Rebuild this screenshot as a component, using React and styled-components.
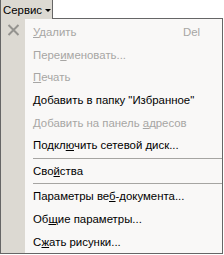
import React from 'react';
import styled, { createGlobalStyle } from 'styled-components';

const GlobalStyle = createGlobalStyle`
  html, body {
    margin: 0;
    padding: 0;
    background: #ffffff;
  }
  body {
    font-family: "Liberation Sans", Arial, sans-serif;
    font-size: 11.4px;
  }
`;

const Wrapper = styled.div`
  width: 223px;
  display: flex;
  flex-direction: column;
  align-items: flex-start;
`;

const MenuTab = styled.div`
  position: relative;
  z-index: 1;
  box-sizing: border-box;
  width: 53px;
  height: 19px;
  margin-bottom: -1px;
  padding-left: 2px;
  display: flex;
  align-items: center;
  gap: 3px;
  background: #dcd9d2;
  border-left: 1px solid #666666;
  border-right: 1px solid #666666;
  color: #000000;
`;

const Arrow = styled.span`
  width: 0;
  height: 0;
  margin-top: 1px;
  border-left: 3px solid transparent;
  border-right: 3px solid transparent;
  border-top: 3px solid #000000;
`;

const Menu = styled.div`
  box-sizing: border-box;
  width: 223px;
  padding-top: 2px;
  border: 1px solid #666666;
  background: linear-gradient(to right, #dcd9d2 24px, #f9f8f7 24px);
  display: flex;
  flex-direction: column;
`;

const Item = styled.div`
  height: 22.6px;
  display: flex;
  align-items: center;
  color: ${(p) => (p.$disabled ? '#a7a6a4' : '#000000')};
  white-space: nowrap;
`;

const IconCell = styled.span`
  width: 24px;
  height: 100%;
  flex: none;
  display: flex;
  justify-content: center;
  align-items: flex-start;
  padding-top: 3px;
  box-sizing: border-box;
`;

const Label = styled.span`
  flex: 1;
  padding-left: 8px;
`;

const Shortcut = styled.span`
  padding-right: 22px;
`;

const Separator = styled.div`
  height: 3px;
  margin-left: 32px;
  display: flex;
  align-items: center;

  &::after {
    content: '';
    flex: 1;
    height: 1px;
    background: #a6a5a2;
  }
`;

const U = styled.u`
  text-decoration-thickness: 1px;
  text-underline-offset: 1px;
`;

const DeleteIcon = () => (
  <svg width="13" height="12" viewBox="0 0 13 12">
    <path d="M1.5 1 L11.5 11 M11.5 1 L1.5 11" stroke="#94938f" strokeWidth="2" fill="none" />
  </svg>
);

const items = [
  { pre: '', key: 'У', post: 'далить', disabled: true, icon: true, shortcut: 'Del' },
  { pre: 'Пере', key: 'и', post: 'меновать...', disabled: true },
  { pre: '', key: 'П', post: 'ечать', disabled: true },
  { pre: '', key: 'Д', post: 'обавить в папку "Избранное"' },
  { pre: 'Добавить на панель ', key: 'а', post: 'дресов', disabled: true },
  { pre: 'Подкл', key: 'ю', post: 'чить сетевой диск...' },
  'sep',
  { pre: 'Сво', key: 'й', post: 'ства' },
  'sep',
  { pre: 'Параметры ве', key: 'б', post: '-документа...' },
  { pre: 'Об', key: 'щ', post: 'ие параметры...' },
  { pre: 'С', key: 'ж', post: 'ать рисунки...' },
];

export default function App() {
  return (
    <>
      <GlobalStyle />
      <Wrapper>
        <MenuTab>
          Сервис
          <Arrow />
        </MenuTab>
        <Menu>
          {items.map((it, i) =>
            it === 'sep' ? (
              <Separator key={i} />
            ) : (
              <Item key={i} $disabled={it.disabled}>
                <IconCell>{it.icon && <DeleteIcon />}</IconCell>
                <Label>
                  {it.pre}
                  <U>{it.key}</U>
                  {it.post}
                </Label>
                {it.shortcut && <Shortcut>{it.shortcut}</Shortcut>}
              </Item>
            )
          )}
        </Menu>
      </Wrapper>
    </>
  );
}
